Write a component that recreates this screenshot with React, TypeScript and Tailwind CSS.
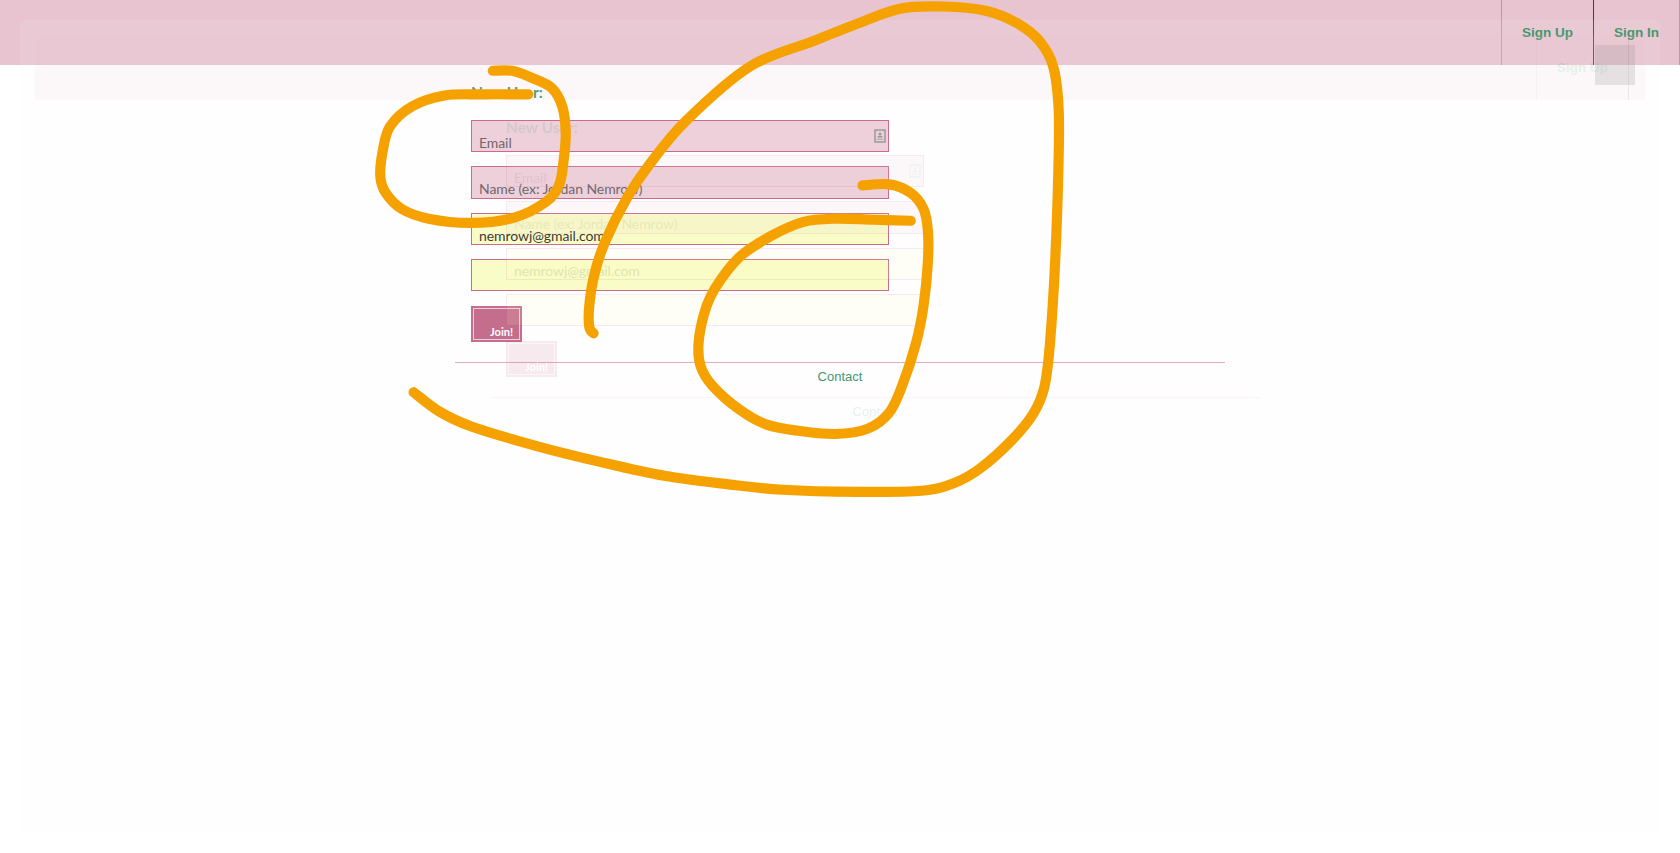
import React from "react";

function smooth(p: number[][]) {
  let d = `M${p[0][0]} ${p[0][1]}`;
  for (let i = 0; i < p.length - 1; i++) {
    const a = p[Math.max(i - 1, 0)], b = p[i], c = p[i + 1], e = p[Math.min(i + 2, p.length - 1)];
    d += ` C${b[0] + (c[0] - a[0]) / 6} ${b[1] + (c[1] - a[1]) / 6} ${c[0] - (e[0] - b[0]) / 6} ${c[1] - (e[1] - b[1]) / 6} ${c[0]} ${c[1]}`;
  }
  return d;
}

const loopA = [[460,66],[478,66],[495,72],[515,82],[525,100],[528,125],[526,150],[522,172],[510,188],[480,203],[440,208],[400,204],[375,195],[360,180],[355,165],[357,142],[364,118],[385,99],[415,89],[450,88],[493,88]];
const loopB = [[554,311],[550,305],[550,285],[555,255],[565,225],[585,185],[605,155],[640,113],[700,62],[760,38],[800,22],[840,8],[880,6],[920,10],[950,22],[970,38],[983,62],[988,100],[988,150],[985,240],[980,320],[975,360],[965,385],[945,410],[915,437],[890,451],[860,458],[800,459],[730,457],[680,452],[620,444],[560,431],[500,416],[440,398],[410,384],[386,366]];
const loopC = [[805,173],[830,172],[850,180],[862,195],[866,215],[866,245],[862,285],[855,320],[842,360],[830,385],[810,400],[780,405],[745,402],[715,396],[690,382],[665,360],[654,342],[652,320],[658,290],[668,268],[690,240],[720,220],[750,207],[780,204],[815,205],[850,206]];

function CardIcon() {
  return (
    <svg width="12" height="14" viewBox="0 0 12 14" className="absolute right-[2px] top-[8px]">
      <rect x="1" y="1" width="10" height="12" fill="none" stroke="#8f8f8f" strokeWidth="1.5" />
      <circle cx="6" cy="5" r="1.5" fill="#8f8f8f" />
      <rect x="3.5" y="7" width="5" height="1.5" fill="#8f8f8f" />
      <rect x="3" y="9.5" width="6" height="1.5" fill="#a8a8a8" />
    </svg>
  );
}

function Field({ label, yellow, dark, icon }: { label?: string; yellow?: boolean; dark?: boolean; icon?: boolean }) {
  return (
    <div
      className={`relative h-[32.33px] w-[418px] border border-[#c4587f] pt-[13px] pl-[7px] text-[14px] leading-[18px] tracking-[-0.08px] ${
        yellow ? "bg-[#fafdc0]" : "bg-[#eccbd7]"
      } ${dark ? "text-[#222222]" : "text-[#5f5359]"}`}
    >
      {label}
      {icon && <CardIcon />}
    </div>
  );
}

function Page() {
  return (
    <div className="w-[1680px] font-['Lato',sans-serif]">
      <header className="flex h-[65px] justify-end bg-[#e8c3d0] font-['Liberation_Sans',sans-serif] text-[13.5px] font-bold text-[#2a8a5c]">
        <a className="flex w-[92px] items-center justify-center border-l border-[#b89aa6] pt-[1px]">Sign Up</a>
        <a className="flex w-[87px] items-center justify-center border-x border-l-[#4d3a44] border-r-[#b89aa6] pt-[1px]">Sign In</a>
      </header>
      <main className="mx-auto w-[770px]">
        <div className="px-4 pt-[18px]">
          <h2 className="h-[37px] text-[15.5px] leading-[18px] font-bold text-[#2a8a5c]">New User:</h2>
          <div className="flex flex-col gap-[14px]">
            <Field label="Email" icon />
            <Field label="Name (ex: Jordan Nemrow)" />
            <Field label="nemrowj@gmail.com" yellow dark />
            <Field yellow />
          </div>
          <button className="mt-[15px] flex h-[36px] w-[51px] items-end justify-end border-2 border-[#bd5a7e] bg-[#bd5a7e] p-0 shadow-[inset_0_0_0_1px_#eccbd7]">
            <span className="pr-[7px] pb-[1px] text-[11px] leading-[14px] font-bold text-white">Join!</span>
          </button>
        </div>
        <footer className="mt-[20px] border-t border-[#e3a0b8] pt-[5px] text-center font-['Liberation_Sans',sans-serif] text-[13px] leading-[18px] text-[#2a8a5c]">
          Contact
        </footer>
      </main>
    </div>
  );
}

export default function App() {
  return (
    <div className="relative h-[853px] w-[1680px] overflow-hidden bg-white">
      <Page />
      <div className="absolute top-[20px] left-[20px] h-[813px] w-[1640px] rounded-[4px] bg-[#f8f8f8]/12" />
      <div className="absolute top-[35px] left-[35px] h-[783px] w-[1610px] overflow-hidden opacity-[0.12]">
        <Page />
      </div>
      <div className="absolute top-[45px] left-[1595px] h-[40px] w-[40px] bg-[#808080]/18" />
      <svg
        className="absolute top-0 left-0 h-[853px] w-[1680px]"
        viewBox="0 0 1568 796"
        fill="none"
        stroke="#f5a200"
        strokeWidth="9.5"
        strokeLinecap="round"
        strokeLinejoin="round"
      >
        <path d={smooth(loopA)} />
        <path d={smooth(loopB)} />
        <path d={smooth(loopC)} />
      </svg>
    </div>
  );
}
